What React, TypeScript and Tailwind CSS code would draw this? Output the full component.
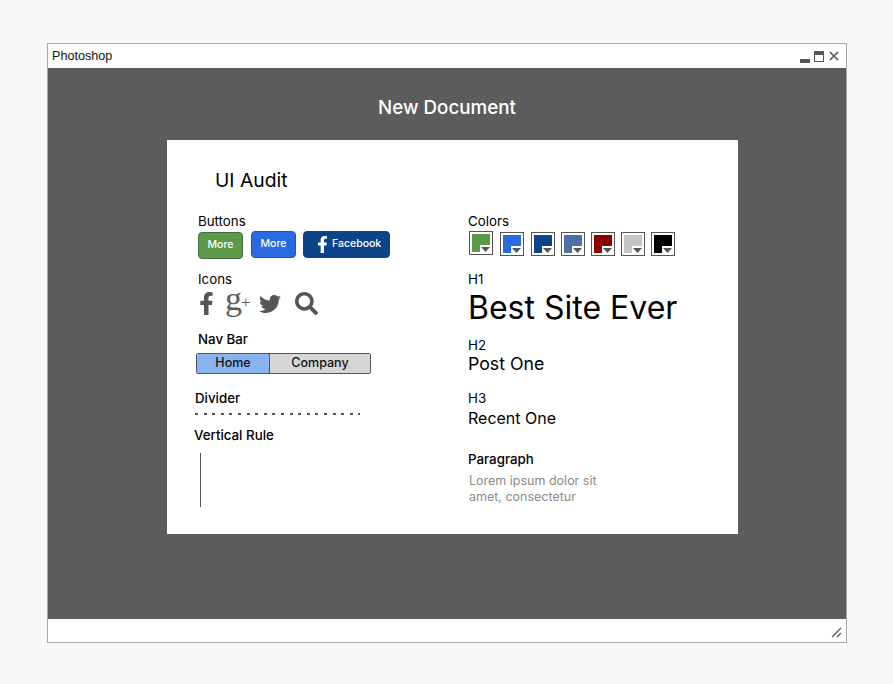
import { FaFacebookF, FaTwitter, FaSearch } from "react-icons/fa";

const Label = ({ children, className = "" }: { children: string; className?: string }) => (
  <div className={`h-5 text-[13.3px] leading-5 text-black ${className}`}>{children}</div>
);

const colors = [
  { c: "bg-[#5b9a46]", m: "ml-[1px] -mt-[1px]" },
  { c: "bg-[#2a6ae0]", m: "ml-[7px]" },
  { c: "bg-[#0b4488]", m: "ml-[7px]" },
  { c: "bg-[#4d71a6]", m: "ml-[6px]" },
  { c: "bg-[#8b0000]", m: "ml-[6px]" },
  { c: "bg-[#c4c4c4]", m: "ml-[6px]" },
  { c: "bg-[#000000]", m: "ml-[6px]" },
];

function Swatch({ c, m }: { c: string; m: string }) {
  return (
    <div className={`relative h-6 w-6 border border-[#555] bg-white p-[2px] ${m}`}>
      <div className={`h-full w-full ${c}`} />
      <div className="absolute bottom-[1px] right-[1px] flex h-[8px] w-[11px] items-center justify-center bg-white">
        <svg width="9" height="5" viewBox="0 0 9 5"><path d="M0 0h9L4.5 5z" fill="#555" /></svg>
      </div>
    </div>
  );
}

export default function App() {
  return (
    <div className="h-[684px] w-[893px] overflow-hidden bg-[#f8f8f8] pl-[47px] pt-[43px] font-['Inter',sans-serif]">
      <div className="flex h-[600px] w-[800px] flex-col border border-[#a8a8a8] bg-white">
        <div className="flex h-6 shrink-0 items-center justify-between pl-1 pr-[7px]">
          <span className="font-['Liberation_Sans',sans-serif] text-[12.6px] text-[#111]">Photoshop</span>
          <div className="flex items-center">
            <div className="mt-[9px] h-1 w-[10px] bg-[#555]" />
            <div className="ml-[4px] h-[11px] w-[10px] border border-[#555] border-t-[4px]" />
            <svg className="ml-[5px]" width="10" height="10" viewBox="0 0 10 10"><path d="M1 1l8 8M9 1l-8 8" stroke="#555" strokeWidth="1.6" /></svg>
          </div>
        </div>
        <div className="flex h-[551px] shrink-0 flex-col bg-[#5c5c5c]">
          <div className="mt-[26px] h-7 self-center text-[18.8px] font-medium leading-7 text-white">New Document</div>
          <div className="ml-[119px] mt-[18px] flex h-[394px] w-[571px] bg-white">
            <div className="w-[301px] pl-[26px]">
              <div className="ml-[22px] mt-[27px] h-[26px] text-[19.3px] leading-[26px] text-black">UI Audit</div>
              <Label className="ml-[5px] mt-[18px]">Buttons</Label>
              <div className="ml-[5px] flex text-[10.5px] font-medium text-white">
                <div className="mt-[1px] flex h-[27px] w-[45px] items-center justify-center rounded-[4px] border border-[#4a6a3f] bg-[#5b9a46] pb-[2px]">More</div>
                <div className="ml-2 flex h-[27px] w-[45px] items-center justify-center rounded-[4px] border border-[#33528a] bg-[#2a6ae0] pb-[2px]">More</div>
                <div className="ml-[7px] flex h-[27px] w-[87px] items-center rounded-[4px] border border-[#2c3f5e] bg-[#0b4488] pb-[2px] pl-[10px]">
                  <FaFacebookF size={17} className="mt-[2px]" />
                  <span className="ml-[1px]">Facebook</span>
                </div>
              </div>
              <Label className="ml-[5px] mt-[10px]">Icons</Label>
              <div className="ml-[5px] mt-[2px] flex h-[25px] items-center text-[#555]">
                <FaFacebookF size={23} className="-ml-[3px]" />
                <div className="ml-[7px] flex w-[24px] items-center font-['Liberation_Serif',serif] text-[#5c5c5c]">
                  <span className="-mt-[9px] text-[34px] leading-[20px]">g</span>
                  <span className="-ml-[1px] -mt-[3px] text-[17px] leading-[15px]">+</span>
                </div>
                <FaTwitter size={22} className="ml-[10px]" />
                <FaSearch size={23} className="ml-[14px]" />
              </div>
              <Label className="ml-[5px] mt-[13px] font-[450]">Nav Bar</Label>
              <div className="ml-[3px] mt-[4px] flex h-[21px] w-[175px] overflow-hidden rounded-[2px] border border-[#555] text-[12.5px] font-[450] leading-[18px] text-[#111]">
                <div className="w-[73px] border-r border-[#555] bg-[#8ab4f0] text-center">Home</div>
                <div className="flex-1 bg-[#d6d6d6] text-center">Company</div>
              </div>
              <Label className="ml-[2px] mt-[14px] font-[450]">Divider</Label>
              <div className="ml-[2px] mt-[5px] h-[2px] w-[165px] bg-[repeating-linear-gradient(90deg,#555_0,#555_3px,transparent_3px,transparent_8.6px)]" />
              <Label className="ml-[1px] mt-[10px] font-[450]">Vertical Rule</Label>
              <div className="ml-[7px] mt-[8px] h-[54px] w-px bg-[#555]" />
            </div>
            <div className="flex-1">
              <Label className="mt-[71px]">Colors</Label>
              <div className="mt-[1px] flex">
                {colors.map((s) => <Swatch key={s.c} c={s.c} m={s.m} />)}
              </div>
              <Label className="mt-[13px]">H1</Label>
              <div className="-mt-[1px] h-[40px] whitespace-nowrap text-[32px] leading-[40px] text-black">Best Site Ever</div>
              <Label className="mt-[7px]">H2</Label>
              <div className="-mt-[2px] h-[22px] text-[17.7px] leading-[22px] text-black">Post One</div>
              <Label className="mt-[13px]">H3</Label>
              <div className="-mt-[1px] h-[22px] text-[16px] leading-[22px] text-black">Recent One</div>
              <Label className="mt-[20px] font-[450]">Paragraph</Label>
              <div className="ml-[1px] mt-[4px] text-[12.5px] leading-[16px] text-[#8a8a8a]">
                <div>Lorem ipsum dolor sit</div>
                <div>amet, consectetur</div>
              </div>
            </div>
          </div>
        </div>
        <div className="flex flex-1 items-end justify-end pb-[4px] pr-[4px]">
          <svg width="11" height="11" viewBox="0 0 11 11"><path d="M1 10L10 1M6 10l4-4" stroke="#555" strokeWidth="1.2" /></svg>
        </div>
      </div>
    </div>
  );
}
